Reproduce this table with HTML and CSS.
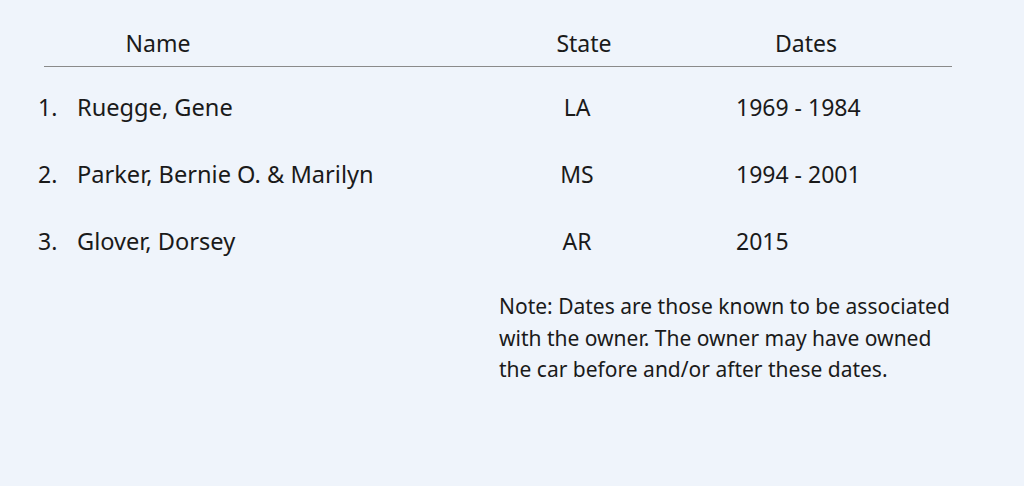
FILE: index.html
```html
<!DOCTYPE html>
<html>
<head>
<meta charset="utf-8">
<link rel="stylesheet" href="styles.css">
</head>
<body>
<div class="page">
  <div class="head">
    <div class="h-name">Name</div>
    <div class="h-spacer"></div>
    <div class="h-state">State</div>
    <div class="h-dates">Dates</div>
  </div>
  <div class="rows">
    <div class="row">
      <div class="num">1.</div>
      <div class="name">Ruegge, Gene</div>
      <div class="state">LA</div>
      <div class="dates">1969 - 1984</div>
    </div>
    <div class="row">
      <div class="num">2.</div>
      <div class="name">Parker, Bernie O. &amp; Marilyn</div>
      <div class="state">MS</div>
      <div class="dates">1994 - 2001</div>
    </div>
    <div class="row">
      <div class="num">3.</div>
      <div class="name">Glover, Dorsey</div>
      <div class="state">AR</div>
      <div class="dates">2015</div>
    </div>
  </div>
  <p class="note">Note: Dates are those known to be associated with the owner. The owner may have owned the car before and/or after these dates.</p>
</div>
</body>
</html>
```

FILE: styles.css
```css
html, body {
  margin: 0;
  padding: 0;
  background: #eff4fb;
}
body {
  font-family: "Noto Sans", "Open Sans", sans-serif;
  color: #1a1a1a;
  font-size: 23px;
}
.page {
  padding-top: 27px;
}
.head {
  margin-left: 44px;
  width: 908px;
  display: grid;
  grid-template-columns: 228px 248px 128px 304px;
  border-bottom: 1.5px solid #8a8a8a;
  line-height: 32px;
  padding-bottom: 7px;
}
.h-name, .h-state {
  text-align: center;
}
.h-dates {
  text-align: center;
  padding-left: 12px;
}
.rows {
  padding-top: 24px;
  display: flex;
  flex-direction: column;
  gap: 35px;
}
.row {
  display: grid;
  grid-template-columns: 39px 436px 128px auto;
  padding-left: 38px;
  line-height: 32px;
}
.name {
  font-size: 23.6px;
}
.state {
  text-align: center;
}
.dates {
  padding-left: 95px;
}
.note {
  margin: 34px 0 0 499px;
  width: 460px;
  font-size: 21px;
  line-height: 31.5px;
}
```
